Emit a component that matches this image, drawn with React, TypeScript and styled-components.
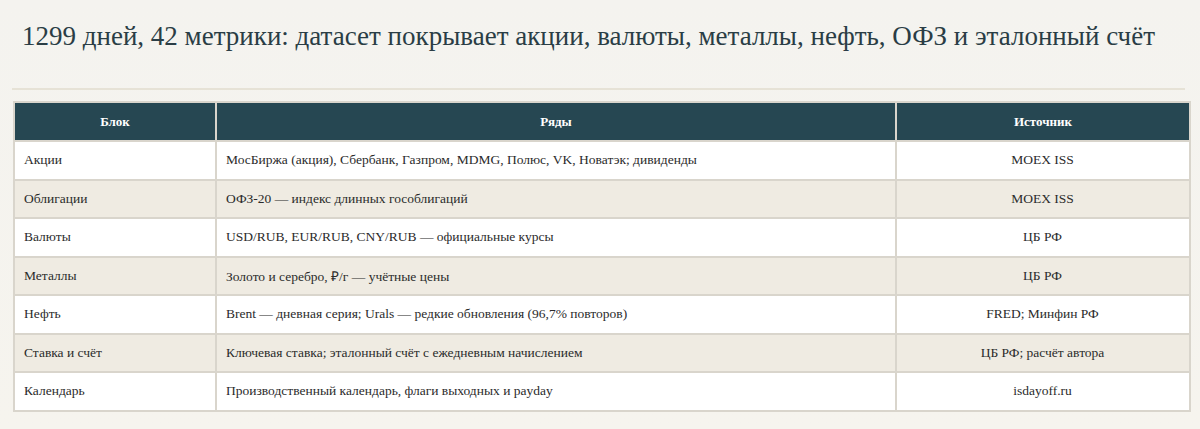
import React from "react";
import styled, { createGlobalStyle } from "styled-components";

const Global = createGlobalStyle`
  html, body { margin: 0; padding: 0; background: #f6f4ee; }
  body { font-family: "Liberation Serif", "Times New Roman", serif; }
`;

const Page = styled.div`
  width: 1200px;
  height: 429px;
  box-sizing: border-box;
  padding: 18px 9px 0 13px;
  background: linear-gradient(180deg, #f4f3ef 0%, #f6f4ee 100%);
`;

const Title = styled.h1`
  margin: 0 0 0 9px;
  font-weight: 400;
  font-size: 27px;
  line-height: 36px;
  color: #2a3d45;
  white-space: nowrap;
`;

const Divider = styled.hr`
  margin: 34px 6px 0 -1px;
  border: 0;
  border-top: 2px solid #e6e2d6;
`;

const Table = styled.table`
  margin-top: 11px;
  width: 100%;
  border-collapse: collapse;
  table-layout: fixed;
  border: 2px solid #d9d5cc;
`;

const Th = styled.th<{ $w?: number }>`
  ${(p) => (p.$w ? `width: ${p.$w}px;` : "")}
  height: 37px;
  padding: 0 10px;
  background: #264752;
  color: #ffffff;
  font-size: 13px;
  font-weight: 700;
  text-align: center;
  border: 2px solid #d9d5cc;
`;

const Row = styled.tr<{ $alt: boolean }>`
  background: ${(p) => (p.$alt ? "#efebe2" : "#ffffff")};
`;

const Td = styled.td<{ $center?: boolean }>`
  height: 36.5px;
  padding: 0 10px 0 9px;
  font-size: 13.5px;
  color: #2b2b2b;
  text-align: ${(p) => (p.$center ? "center" : "left")};
  border: 2px solid #d9d5cc;
  white-space: nowrap;
`;

const rows: [string, string, string][] = [
  ["Акции", "МосБиржа (акция), Сбербанк, Газпром, MDMG, Полюс, VK, Новатэк; дивиденды", "MOEX ISS"],
  ["Облигации", "ОФЗ-20 — индекс длинных гособлигаций", "MOEX ISS"],
  ["Валюты", "USD/RUB, EUR/RUB, CNY/RUB — официальные курсы", "ЦБ РФ"],
  ["Металлы", "Золото и серебро, ₽/г — учётные цены", "ЦБ РФ"],
  ["Нефть", "Brent — дневная серия; Urals — редкие обновления (96,7% повторов)", "FRED; Минфин РФ"],
  ["Ставка и счёт", "Ключевая ставка; эталонный счёт с ежедневным начислением", "ЦБ РФ; расчёт автора"],
  ["Календарь", "Производственный календарь, флаги выходных и payday", "isdayoff.ru"],
];

export default function App() {
  return (
    <Page>
      <Global />
      <Title>1299 дней, 42 метрики: датасет покрывает акции, валюты, металлы, нефть, ОФЗ и эталонный счёт</Title>
      <Divider />
      <Table>
        <thead>
          <tr>
            <Th $w={180}>Блок</Th>
            <Th>Ряды</Th>
            <Th $w={272}>Источник</Th>
          </tr>
        </thead>
        <tbody>
          {rows.map((r, i) => (
            <Row key={r[0]} $alt={i % 2 === 1}>
              <Td>{r[0]}</Td>
              <Td>{r[1]}</Td>
              <Td $center>{r[2]}</Td>
            </Row>
          ))}
        </tbody>
      </Table>
    </Page>
  );
}
